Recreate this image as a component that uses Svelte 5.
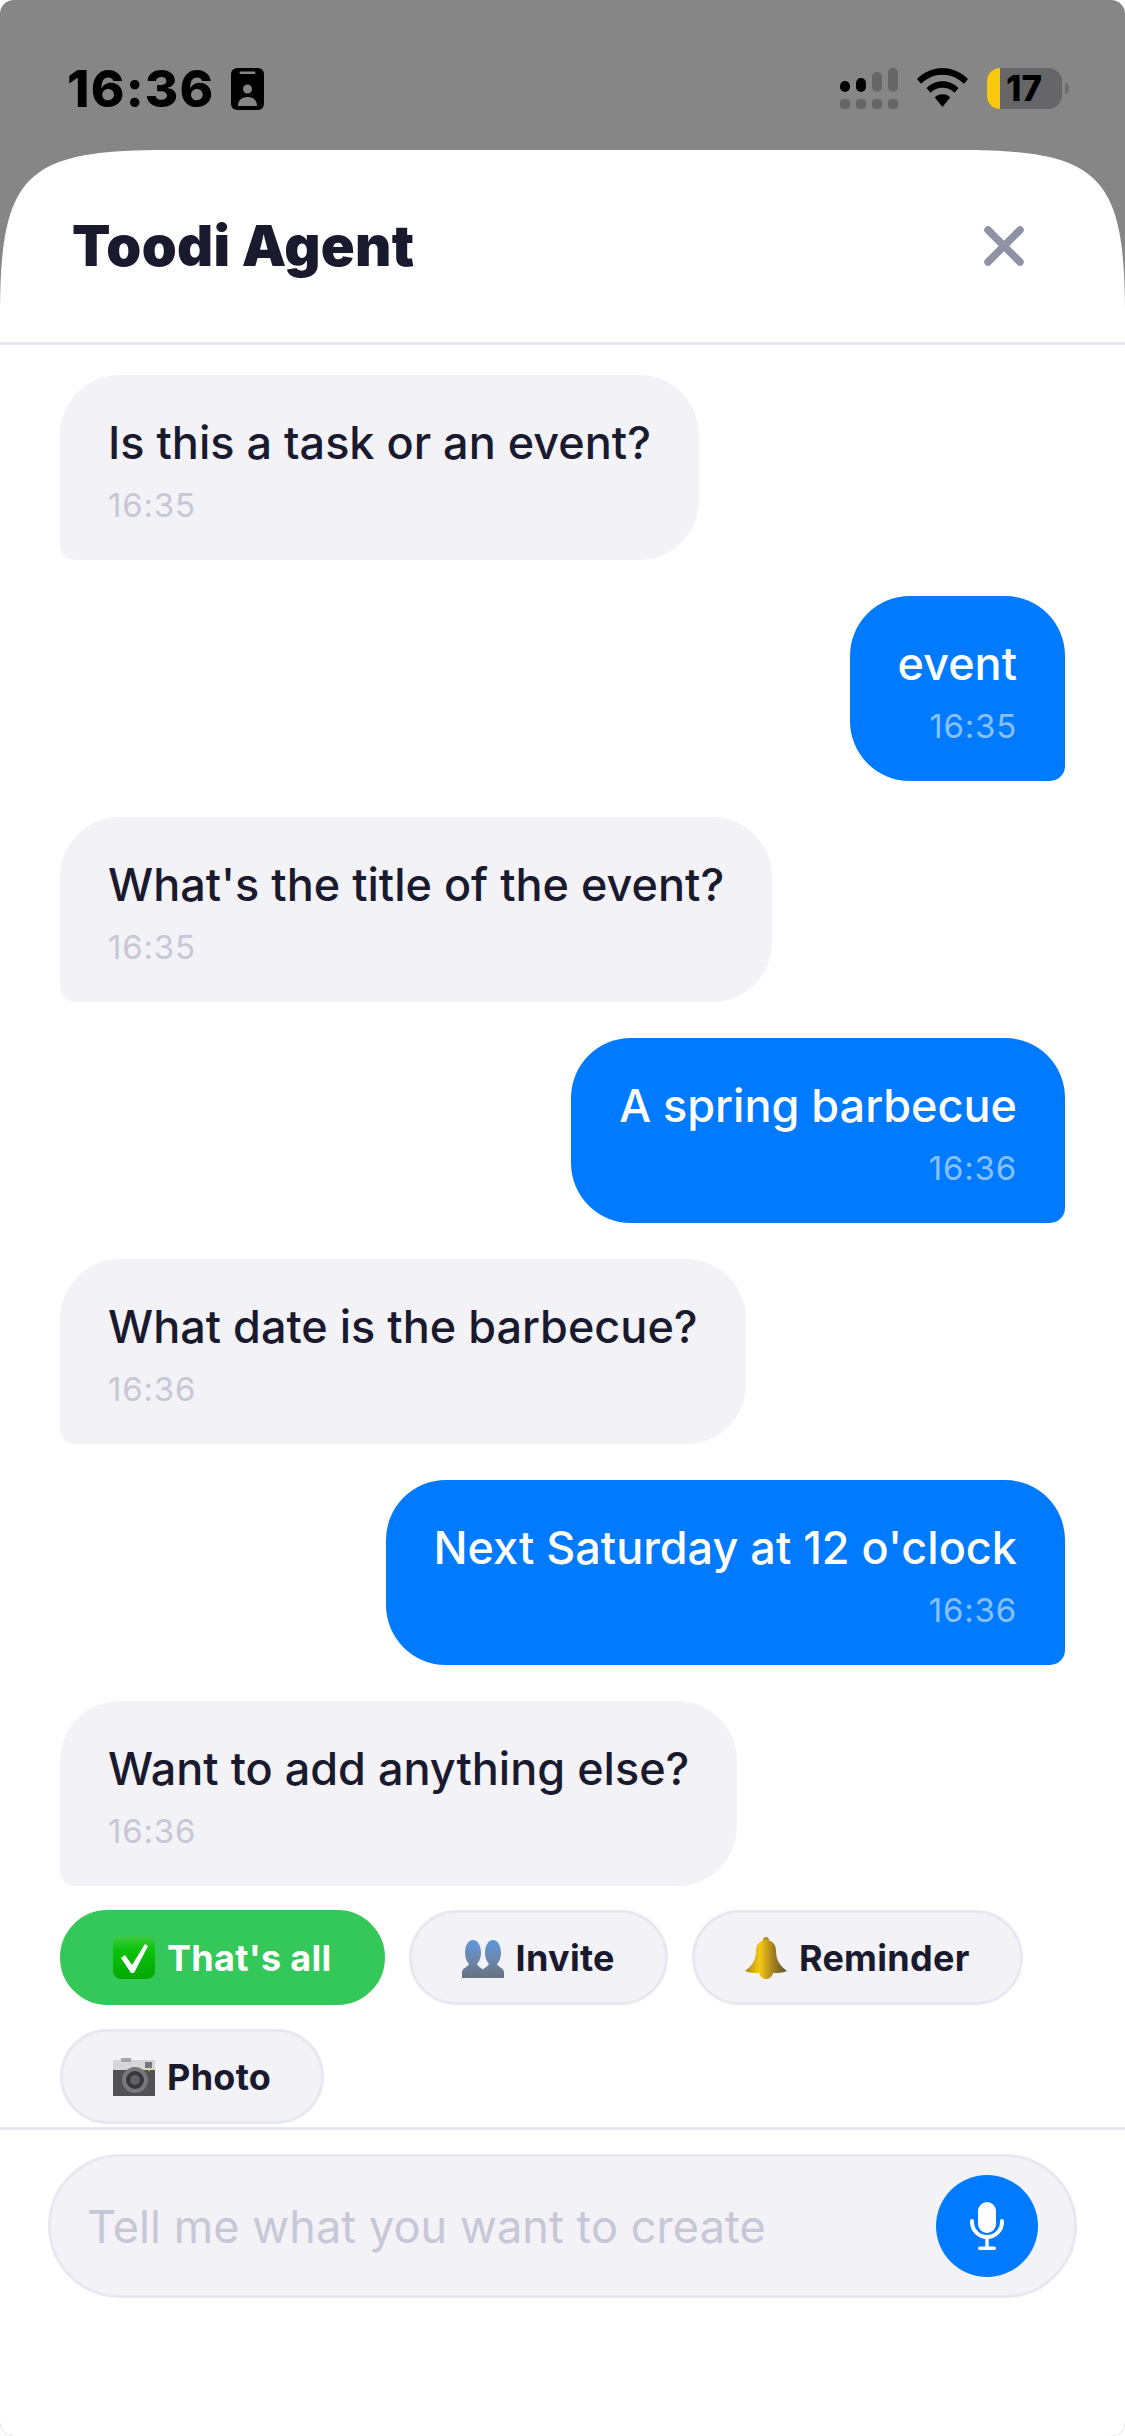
<script lang="ts">
  const messages = [
    { text: 'Is this a task or an event?', time: '16:35', mine: false },
    { text: 'event', time: '16:35', mine: true },
    { text: "What's the title of the event?", time: '16:35', mine: false },
    { text: 'A spring barbecue', time: '16:36', mine: true },
    { text: 'What date is the barbecue?', time: '16:36', mine: false },
    { text: "Next Saturday at 12 o'clock", time: '16:36', mine: true },
    { text: 'Want to add anything else?', time: '16:36', mine: false },
  ];
</script>

<div class="screen">
  <header class="status">
    <div class="status-left">
      <span class="clock">16:36</span>
      <svg class="badge" viewBox="0 0 33 42" width="33" height="42">
        <rect width="33" height="42" rx="6" fill="#000" />
        <rect x="8.500" y="3.500" width="16" height="2.500" rx="1.200" fill="#868686" />
        <circle cx="16.500" cy="21" r="4.500" fill="#868686" />
        <path d="M7 38c0-6 4-9 9.500-9s9.500 3 9.500 9z" fill="#868686" />
      </svg>
    </div>
    <div class="status-right">
      <svg viewBox="0 0 58 41" width="58" height="41">
        <rect x="0" y="13" width="10" height="11" rx="5" fill="#000" />
        <rect x="16" y="10" width="10" height="14" rx="5" fill="#000" />
        <rect x="32" y="4" width="10" height="20" rx="5" fill="#666" />
        <rect x="48" y="0" width="10" height="24" rx="5" fill="#666" />
        <rect x="0" y="31" width="10" height="10" rx="3.500" fill="#666" />
        <rect x="16" y="31" width="10" height="10" rx="3.500" fill="#666" />
        <rect x="32" y="31" width="10" height="10" rx="3.500" fill="#666" />
        <rect x="48" y="31" width="10" height="10" rx="3.500" fill="#666" />
      </svg>
      <svg class="wifi" viewBox="0 0 51 37" width="51" height="39" preserveAspectRatio="none">
        <path d="M25.500 0C16 0 7 3.800 0 10.500l4 4.500C10 9.300 17.500 6.300 25.500 6.300S41 9.300 47 15l4-4.500C44 3.800 35 0 25.500 0z" fill="#000" />
        <path d="M25.500 12.500c-6 0-11.500 2.300-16 6.400l4 4.500c3.200-3 7.400-4.700 12-4.700s8.800 1.700 12 4.700l4-4.500c-4.500-4.100-10-6.400-16-6.400z" fill="#000" />
        <path d="M25.500 25c-3 0-5.700 1.100-7.700 3l7.700 9 7.700-9c-2-1.900-4.700-3-7.700-3z" fill="#000" />
      </svg>
      <div class="battery">
        <div class="battery-body">
          <span class="battery-fill"></span>
          <span class="battery-level">17</span>
        </div>
        <span class="battery-nub"></span>
      </div>
    </div>
  </header>

  <main class="sheet">
    <div class="sheet-head">
      <h1>Toodi Agent</h1>
      <button class="close" aria-label="Close">
        <svg viewBox="0 0 46 46" width="46" height="46">
          <path d="M7 7l32 32M39 7L7 39" stroke="#8e92a4" stroke-width="7.500" stroke-linecap="round" fill="none" />
        </svg>
      </button>
    </div>

    <div class="messages">
      {#each messages as m}
        <div class="bubble" class:mine={m.mine}>
          <div class="text">{m.text}</div>
          <div class="time">{m.time}</div>
        </div>
      {/each}
    </div>

    <div class="chips">
      <button class="chip done">
        <svg class="emoji" viewBox="0 0 42 42">
          <defs>
            <linearGradient id="check-bg" x1="0" y1="0" x2="0" y2="1">
              <stop offset="0" stop-color="#3ec93a" />
              <stop offset=".3" stop-color="#0cc20c" />
              <stop offset="1" stop-color="#02a802" />
            </linearGradient>
          </defs>
          <rect width="42" height="42" rx="8" fill="url(#check-bg)" />
          <path d="M8 21l4-3 7 10L32 7l3 2-14 27h-3z" fill="#fff" />
        </svg>
        That's all
      </button>
      <button class="chip">
        <svg class="emoji" viewBox="0 0 42 42">
          <defs>
            <linearGradient id="bust" x1="0" y1="0" x2="0" y2="1">
              <stop offset="0" stop-color="#5f97df" />
              <stop offset=".55" stop-color="#6c86a8" />
              <stop offset="1" stop-color="#667180" />
            </linearGradient>
          </defs>
          <path d="M0 41v-6c0-4 6-5 7-8-2-2-4-6-4-11C3 9 6 3 11 3s8 6 8 13c0 5-2 9-4 11 1 3 6 4 7 8v6z" fill="url(#bust)" />
          <path d="M20 41v-6c0-4 6-5 7-8-2-2-4-6-4-11 0-7 3-13 8-13s8 6 8 13c0 5-2 9-4 11 1 3 7 4 7 8v6z" fill="url(#bust)" />
        </svg>
        Invite
      </button>
      <button class="chip">
        <svg class="emoji" viewBox="0 0 42 42">
          <defs>
            <linearGradient id="bell" x1="0" y1="0" x2="1" y2="0">
              <stop offset="0" stop-color="#a9841c" />
              <stop offset=".35" stop-color="#f6c916" />
              <stop offset=".7" stop-color="#9c7a1e" />
              <stop offset="1" stop-color="#5d5238" />
            </linearGradient>
          </defs>
          <circle cx="21" cy="3" r="3" fill="#b8901a" />
          <path d="M21 3c-6 0-10 4-10 11 0 9-4 15-11 20 5 2 9 2 14 2 1 4 4 6 7 6s6-2 7-6c5 0 9 0 14-2-7-5-11-11-11-20 0-7-4-11-10-11z" fill="url(#bell)" />
        </svg>
        Reminder
      </button>
      <button class="chip">
        <svg class="emoji" viewBox="0 0 42 42">
          <rect x="0" y="4" width="42" height="11" fill="#d6d6d8" />
          <rect x="0" y="14" width="42" height="26" fill="#525255" />
          <rect x="32" y="6" width="7" height="6" fill="#77777a" />
          <rect x="8" y="2" width="10" height="4" fill="#a5a5a8" />
          <circle cx="22" cy="24" r="13" fill="#78787c" />
          <circle cx="22" cy="24" r="9" fill="#38383c" />
          <circle cx="22" cy="24" r="5" fill="#5f6068" />
          <rect x="35" y="13" width="2" height="2" fill="#f0c020" />
        </svg>
        Photo
      </button>
    </div>

    <div class="composer">
      <div class="field">
        <input type="text" placeholder="Tell me what you want to create" />
        <button class="mic" aria-label="Voice input">
          <svg viewBox="0 0 60 60" width="60" height="60">
            <rect x="21" y="6" width="18" height="31" rx="9" fill="#fff" />
            <path d="M15 25v1a15 15 0 0 0 30 0v-1" stroke="#fff" stroke-width="4" stroke-linecap="round" fill="none" />
            <path d="M30 42v10" stroke="#fff" stroke-width="3.500" />
            <rect x="21" y="50.500" width="18" height="3.500" rx="1.700" fill="#fff" />
          </svg>
        </button>
      </div>
    </div>
  </main>
</div>

<style>
  :global(body) { margin: 0; background: #fff; }
  .screen { width: 1125px; height: 2436px; display: flex; flex-direction: column; background: #868686; border-radius: 14px; overflow: hidden; font-family: Inter, "Liberation Sans", sans-serif; color: #1a1a2e; }
  .status { height: 150px; flex: none; box-sizing: border-box; padding: 58px 56px 0 67px; display: flex; justify-content: space-between; align-items: flex-start; }
  .status-left { display: flex; align-items: center; gap: 17px; }
  .clock { font-size: 51px; line-height: 62px; font-weight: 800; letter-spacing: 1.200px; color: #000; }
  .status-right { display: flex; align-items: flex-start; padding-top: 10px; }
  .wifi { margin: 0 19px 0 19px; }
  .battery { display: flex; align-items: center; }
  .battery-body { width: 75px; height: 41px; background: #666668; border-radius: 14px; position: relative; display: flex; align-items: center; justify-content: center; }
  .battery-fill { position: absolute; left: 0; top: 0; bottom: 0; width: 13px; background: #f8c70e; border-radius: 14px 0 0 14px; }
  .battery-level { position: relative; font-size: 35px; font-weight: 800; color: #000; line-height: 41px; padding-right: 1px; }
  .battery-nub { width: 4px; height: 11px; margin-left: 3px; background: #6c6c6e; border-radius: 0 5px 5px 0; }

  .sheet { flex: 1; min-height: 0; background: #fff; display: flex; flex-direction: column; clip-path: path('M0 165C0 25 25 0 165 0L960 0C1100 0 1125 25 1125 165L1125 2286L0 2286Z'); }
  .sheet-head { height: 192px; flex: none; border-bottom: 3px solid #e8e8f0; display: flex; align-items: center; justify-content: space-between; padding: 0 98px 0 72px; }
  h1 { margin: 0; font-size: 56px; font-weight: 900; line-height: 66px; letter-spacing: .3px; color: #1a1a2e; }
  .close { background: none; border: 0; padding: 0; display: flex; }

  .messages { display: flex; flex-direction: column; align-items: flex-start; gap: 36px; padding: 30px 60px 0; }
  .bubble { box-sizing: border-box; height: 185px; padding: 38px 48px 0; background: #f2f2f7; border-radius: 60px 60px 60px 15px; }
  .bubble.mine { align-self: flex-end; background: #007aff; color: #fff; border-radius: 60px 60px 15px 60px; text-align: right; }
  .text { font-size: 45px; line-height: 60px; font-weight: 500; white-space: nowrap; }
  .time { font-size: 33px; line-height: 42px; margin-top: 11px; letter-spacing: .8px; color: #c7c7d6; }
  .mine .time { color: rgba(255, 255, 255, .55); }

  .chips { display: flex; flex-wrap: wrap; gap: 24px; padding: 24px 60px 0; }
  .chip { box-sizing: border-box; height: 95px; padding: 0 50px; display: inline-flex; align-items: center; gap: 12px; background: #f2f2f7; border: 3px solid #e8e8f0; border-radius: 48px; font: 700 36px Inter, "Liberation Sans", sans-serif; letter-spacing: .3px; color: #1a1a2e; }
  .chip.done { background: #34c759; border-color: #34c759; color: #fff; }
  .emoji { width: 42px; height: 42px; flex: none; }

  .composer { margin-top: 3px; border-top: 3px solid #e8e8f0; padding: 24px 48px 0; }
  .field { box-sizing: border-box; height: 144px; background: #f2f2f7; border: 3px solid #e8e8f0; border-radius: 72px; display: flex; align-items: center; padding: 0 36px 0 36px; }
  input { flex: 1; min-width: 0; border: 0; outline: 0; background: none; padding: 0; font: 400 45px Inter, "Liberation Sans", sans-serif; letter-spacing: .1px; color: #1a1a2e; }
  input::placeholder { color: #c7c7d6; opacity: 1; }
  .mic { width: 102px; height: 102px; flex: none; border: 0; border-radius: 50%; background: #007aff; padding: 0; display: flex; align-items: center; justify-content: center; }
</style>
